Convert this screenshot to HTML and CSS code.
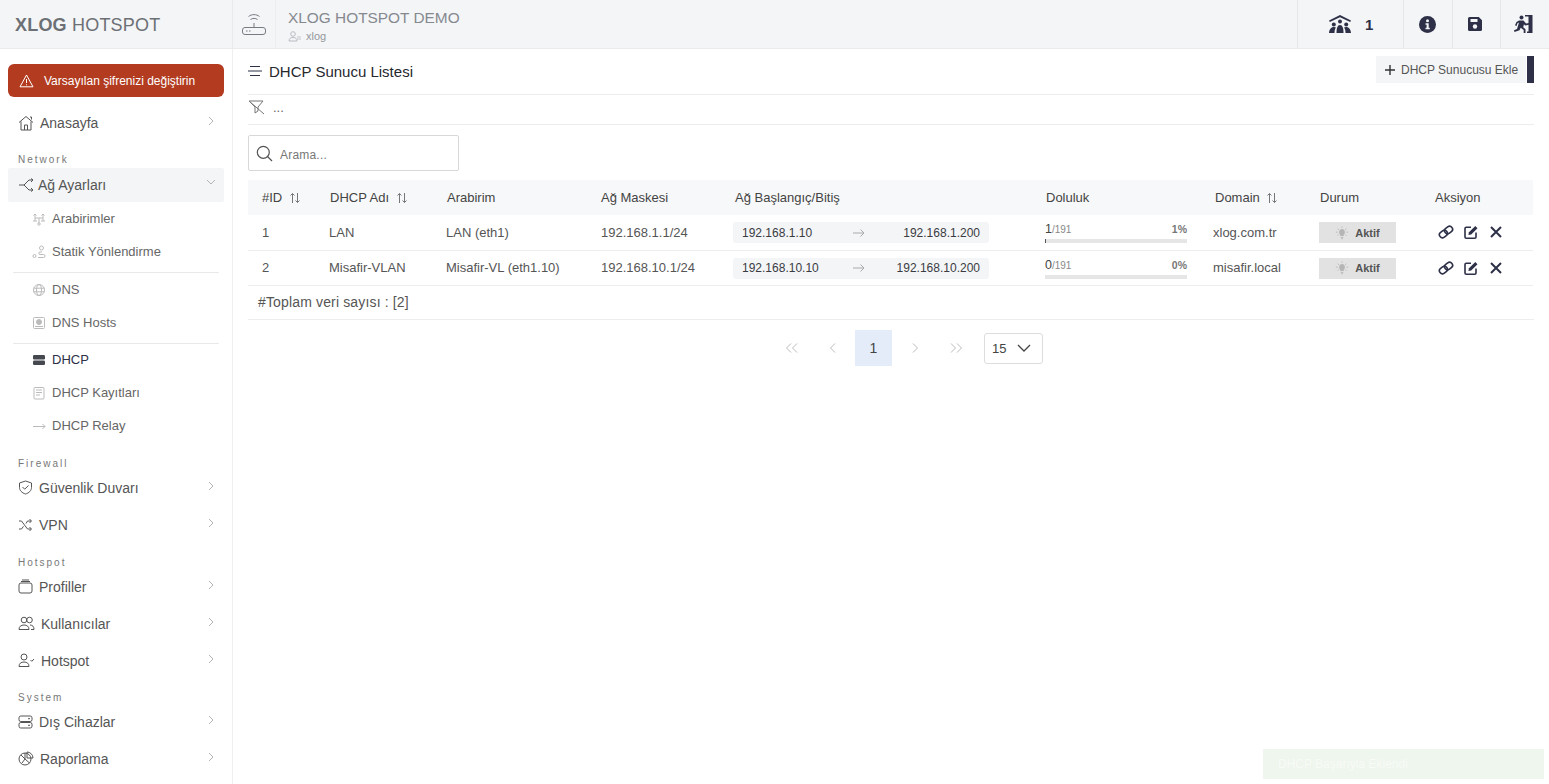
FILE: index.html
```html
<!DOCTYPE html>
<html lang="tr">
<head>
<meta charset="utf-8">
<title>XLOG HOTSPOT</title>
<link rel="stylesheet" href="styles.css">
</head>
<body>
<svg class="defs" width="0" height="0" aria-hidden="true">
  <defs>
    <symbol id="chev-r" viewBox="0 0 10 10"><path d="M3 1l4 4-4 4" fill="none" stroke="currentColor"/></symbol>
    <symbol id="sort" viewBox="0 0 12 12"><path d="M3.500 11V1.500M1.500 3.500l2-2 2 2M8.500 1v9.500M6.500 8.500l2 2 2-2" fill="none" stroke="currentColor"/></symbol>
    <symbol id="bulb" viewBox="0 0 16 16"><path d="M8 3.500a3.500 3.500 0 0 0-2 6.300V11.500h4V9.800a3.500 3.500 0 0 0-2-6.300z" fill="currentColor"/><path d="M6.500 13h3M7 14.500h2M1 7h2M13 7h2M3 3l1.400 1.400M13 3l-1.400 1.400M3 11l1.400-1.400M13 11l-1.400-1.400M8 0.500v1.500" fill="none" stroke="currentColor"/></symbol>
    <symbol id="link" viewBox="0 0 16 16"><g transform="rotate(-38 8 8)" fill="none" stroke="currentColor" stroke-width="1.600"><rect x="0.500" y="5" width="8.500" height="6" rx="3"/><rect x="7" y="5" width="8.500" height="6" rx="3"/></g></symbol>
    <symbol id="edit" viewBox="0 0 16 16"><path d="M13 8.500V13a1.200 1.200 0 0 1-1.200 1.200H3.200A1.200 1.200 0 0 1 2 13V4.500a1.200 1.200 0 0 1 1.200-1.200H8" fill="none" stroke="currentColor" stroke-width="1.600"/><path d="M6 8.300L12.300 2l2.200 2.200-6.300 6.300-2.800.6z" fill="currentColor"/></symbol>
    <symbol id="close" viewBox="0 0 16 16"><path d="M3 3l10 10M13 3L3 13" fill="none" stroke="currentColor" stroke-width="2"/></symbol>
    <symbol id="arrow" viewBox="0 0 12 10"><path d="M0 5h11M7.500 1.500L11 5 7.500 8.500" fill="none" stroke="currentColor"/></symbol>
  </defs>
</svg>
<div class="app">
  <header class="topbar">
    <div class="brand"><b>XLOG</b> HOTSPOT</div>
    <div class="device">
      <svg class="router" width="26" height="26" viewBox="0 0 26 26" fill="none" stroke="#777b82"><path d="M7.500 5.500c3-2.500 8-2.500 11 0M9.500 8.500c2-1.500 5-1.500 7 0M13 12v4"/><rect x="1.500" y="16.500" width="23" height="7" rx="2.500"/><path d="M5 20h1.500M8 20h1.500"/></svg>
      <div class="device-text">
        <div class="device-title">XLOG HOTSPOT DEMO</div>
        <div class="device-user"><svg width="14" height="11" viewBox="0 0 14 11" fill="none" stroke="#b9bcc1"><circle cx="5" cy="3" r="2.300"/><path d="M1 10c0-2.500 1.500-3.500 4-3.500s4 1 4 3.500z"/><path d="M9 6h4M9 8h4" stroke-width=".8"/></svg><span>xlog</span></div>
      </div>
    </div>
    <div class="top-actions">
      <div class="top-cell top-cell-users">
        <svg width="24" height="18" viewBox="0 0 24 18" fill="#2d3047"><path d="M12 0L1 5.500 1.800 7 12 2.200 22.200 7 23 5.500z"/><circle cx="12" cy="6.500" r="2"/><path d="M8.500 18c0-5 1-8 3.500-8s3.500 3 3.500 8z"/><circle cx="5.800" cy="9.500" r="2"/><path d="M1 18c.3-3.500 2-6 4.800-6 1 0 1.700.2 2.200.6-1 1.200-1.500 3-1.500 5.400z"/><circle cx="18.200" cy="9.500" r="2"/><path d="M23 18c-.3-3.500-2-6-4.800-6-1 0-1.700.2-2.200.6 1 1.200 1.500 3 1.500 5.400z"/></svg>
        <b>1</b>
      </div>
      <div class="top-cell top-cell-info">
        <svg width="17" height="17" viewBox="0 0 17 17"><circle cx="8.500" cy="8.500" r="8.500" fill="#2d3047"/><circle cx="8.500" cy="4.800" r="1.500" fill="#f4f5f7"/><path d="M6.500 7.300h3.200v4.500h1.100v1.500H6.500v-1.500h1.100V8.800H6.500z" fill="#f4f5f7"/></svg>
      </div>
      <div class="top-cell top-cell-save">
        <svg width="16" height="16" viewBox="0 0 16 16"><path d="M2.500 1h9.300L15 4.200v9.300A1.500 1.500 0 0 1 13.500 15h-11A1.500 1.500 0 0 1 1 13.500v-11A1.500 1.500 0 0 1 2.500 1z" fill="#2d3047"/><rect x="3.500" y="3" width="7" height="3" fill="#f4f5f7"/><circle cx="8" cy="10.500" r="2.200" fill="#f4f5f7"/></svg>
      </div>
      <div class="top-cell top-cell-exit">
        <svg width="20" height="18" viewBox="0 0 20 18" fill="#2d3047"><path d="M12 0h7.500v18H14v-1.500h1.500V1.500H12z"/><circle cx="8.500" cy="2.500" r="2"/><path d="M6 5.500h4.500L13 8.500l3-.5v1.800l-4 .7-1-1.200-.8 3 2.300 2V18h-1.800v-3l-3-2.200-1.200 2.500L1.500 17l-.5-1.700 3-1.300 2-6.500-1.500.7L3.500 11 2 10.300l1.500-3.300z"/></svg>
      </div>
    </div>
  </header>

  <nav class="sidebar">
    <a class="alert">
      <svg width="15" height="14" viewBox="0 0 15 14" fill="none" stroke="#fff"><path d="M7.500 1L14 12.800H1z" stroke-linejoin="round"/><path d="M7.500 5v4M7.500 10.300v1"/></svg>
      <span>Varsayılan şifrenizi değiştirin</span>
    </a>
    <a class="nav-item">
      <svg class="nav-ico" width="17" height="16" viewBox="0 0 17 16"><path d="M1 7.500L8 1.500l7 6M3 6.500V15h10V6.500M6.500 15v-5h3v5M12 2h1.500v2.500"/></svg>
      <span class="nav-text nav-gap-home">Anasayfa</span>
      <svg class="nav-chev" width="10" height="10"><use href="#chev-r"/></svg>
    </a>
    <div class="nav-label nav-label-net">Network</div>
    <a class="nav-item nav-item-open">
      <svg class="nav-ico" width="17" height="14" viewBox="0 0 17 14"><path d="M1 7h5l5-5h4M6 7l5 5h4M13 .5L15 2l-2 2M13 10l2 2-2 1.500"/></svg>
      <span class="nav-text nav-gap-net">Ağ Ayarları</span>
      <svg class="nav-chev nav-chev-down" width="10" height="10"><use href="#chev-r"/></svg>
    </a>
    <a class="sub-item">
      <svg class="sub-ico" width="14" height="14" viewBox="0 0 14 14"><path d="M3 2v7M11 2v7M3 6h8M7 6v5"/><circle cx="7" cy="12" r="1.200"/><path d="M1.500 3.500L3 2l1.500 1.500M9.500 3.500L11 2l1.500 1.500M1 9h4M9 9h4"/></svg>
      <span>Arabirimler</span>
    </a>
    <a class="sub-item">
      <svg class="sub-ico" width="14" height="14" viewBox="0 0 14 14"><circle cx="9.500" cy="3" r="2"/><path d="M6 12.500h5.500a1.500 1.500 0 0 0 0-3H8a1.200 1.200 0 0 1 0-2.500h2"/><circle cx="2.500" cy="11" r="1.500"/></svg>
      <span>Statik Yönlendirme</span>
    </a>
    <div class="sub-sep"></div>
    <a class="sub-item">
      <svg class="sub-ico" width="14" height="14" viewBox="0 0 14 14"><circle cx="7" cy="7" r="5.500"/><ellipse cx="7" cy="7" rx="2.500" ry="5.500"/><path d="M1.500 5.200h11M1.500 8.800h11"/></svg>
      <span>DNS</span>
    </a>
    <a class="sub-item">
      <svg class="sub-ico" width="14" height="14" viewBox="0 0 14 14"><rect x="1.500" y="1.500" width="11" height="11" rx="1"/><path d="M3 10.500h8"/><circle cx="7" cy="6" r="2.500" fill="#bbb"/></svg>
      <span>DNS Hosts</span>
    </a>
    <div class="sub-sep sub-sep-tight"></div>
    <a class="sub-item sub-item-active">
      <svg width="14" height="14" viewBox="0 0 14 14" fill="#45484f"><rect x="1" y="2" width="12" height="4.500" rx="1.200"/><rect x="1" y="7.500" width="12" height="4.500" rx="1.200"/></svg>
      <span>DHCP</span>
    </a>
    <a class="sub-item">
      <svg class="sub-ico" width="14" height="14" viewBox="0 0 14 14"><rect x="2" y="1.500" width="10" height="11.500" rx="1"/><path d="M4 4h6M4 6.500h6M4 9h4"/></svg>
      <span>DHCP Kayıtları</span>
    </a>
    <a class="sub-item">
      <svg class="sub-ico" width="14" height="14" viewBox="0 0 14 14"><path d="M1 7.500h12M10.500 5l2.500 2.500L10.500 10"/></svg>
      <span>DHCP Relay</span>
    </a>
    <div class="nav-label nav-label-firewall">Firewall</div>
    <a class="nav-item">
      <svg class="nav-ico" width="15" height="15" viewBox="0 0 15 15"><path d="M7.500 1l6 2v4.500c0 3-2.500 5.500-6 6.500-3.500-1-6-3.500-6-6.500V3z"/><path d="M4.500 7l2.200 2.200 3.800-3.700"/></svg>
      <span class="nav-text">Güvenlik Duvarı</span>
      <svg class="nav-chev" width="10" height="10"><use href="#chev-r"/></svg>
    </a>
    <a class="nav-item">
      <svg class="nav-ico" width="15" height="14" viewBox="0 0 15 14"><path d="M1 3h2.500l6 8H13M1 11h2.500l2-2.700M8 5.500L9.500 3H13M11.500 1L13.500 3l-2 2M11.500 9l2 2-2 2"/></svg>
      <span class="nav-text">VPN</span>
      <svg class="nav-chev" width="10" height="10"><use href="#chev-r"/></svg>
    </a>
    <div class="nav-label nav-label-hotspot">Hotspot</div>
    <a class="nav-item">
      <svg class="nav-ico" width="15" height="15" viewBox="0 0 15 15"><rect x="1" y="4" width="13" height="10" rx="2"/><path d="M3 2.500h9M4 1h7"/></svg>
      <span class="nav-text">Profiller</span>
      <svg class="nav-chev" width="10" height="10"><use href="#chev-r"/></svg>
    </a>
    <a class="nav-item">
      <svg class="nav-ico" width="17" height="15" viewBox="0 0 17 15"><circle cx="6" cy="4" r="2.800"/><circle cx="11.500" cy="4" r="2.800"/><path d="M1 13.500c0-3 2-4.500 5-4.500s5 1.500 5 4.500zM12 9c2.500 0 4 1.500 4 4.500h-3"/></svg>
      <span class="nav-text nav-gap-user">Kullanıcılar</span>
      <svg class="nav-chev" width="10" height="10"><use href="#chev-r"/></svg>
    </a>
    <a class="nav-item">
      <svg class="nav-ico" width="17" height="15" viewBox="0 0 17 15"><circle cx="6" cy="4" r="3"/><path d="M1 13.500c0-3 2-4.500 5-4.500s5 1.500 5 4.500zM12.500 7l1.300 1.300L16 6"/></svg>
      <span class="nav-text nav-gap-user">Hotspot</span>
      <svg class="nav-chev" width="10" height="10"><use href="#chev-r"/></svg>
    </a>
    <div class="nav-label nav-label-system">System</div>
    <a class="nav-item">
      <svg class="nav-ico" width="15" height="14" viewBox="0 0 15 14"><rect x="1" y="1" width="13" height="5.500" rx="1.800"/><rect x="1" y="7.500" width="13" height="5.500" rx="1.800"/><path d="M10 3.700h2M10 10.300h2"/></svg>
      <span class="nav-text">Dış Cihazlar</span>
      <svg class="nav-chev" width="10" height="10"><use href="#chev-r"/></svg>
    </a>
    <a class="nav-item">
      <svg class="nav-ico" width="16" height="15" viewBox="0 0 16 15"><circle cx="7" cy="8" r="6"/><path d="M7 2v6l4.500 4M9 1a6 6 0 0 1 6 6H9zM7 8L3 4M7 8l-3 4"/></svg>
      <span class="nav-text nav-gap-report">Raporlama</span>
      <svg class="nav-chev" width="10" height="10"><use href="#chev-r"/></svg>
    </a>
  </nav>

  <main class="content">
    <div class="page-head">
      <div class="page-title">
        <svg width="14" height="12" viewBox="0 0 14 12" fill="none" stroke="#2d3047"><path d="M2 1.500h10M0 6h14M2 10.500h10"/></svg>
        <span>DHCP Sunucu Listesi</span>
      </div>
      <div class="page-btns">
        <a class="btn-add"><svg width="10" height="10" viewBox="0 0 10 10" stroke="#333" fill="none" stroke-width="1.400"><path d="M5 0v10M0 5h10"/></svg>DHCP Sunucusu Ekle</a>
        <span class="btn-bar"></span>
      </div>
    </div>
    <div class="filter-row">
      <svg width="17" height="15" viewBox="0 0 17 15" fill="none" stroke="#777"><path d="M1 1h14L10 7v4l-3 2V7zM1 1l15 13"/></svg>
      <span>...</span>
    </div>
    <div class="search-box">
      <svg width="17" height="17" viewBox="0 0 17 17" fill="none" stroke="#555" stroke-width="1.200"><circle cx="7.300" cy="7.300" r="6"/><path d="M11.500 11.500l4.500 4.500"/></svg>
      <span>Arama...</span>
    </div>

    <table class="grid">
      <colgroup><col><col><col><col><col><col><col><col><col></colgroup>
      <thead>
        <tr>
          <th class="th-first">#ID <svg class="sort" width="12" height="12"><use href="#sort"/></svg></th>
          <th>DHCP Adı <svg class="sort" width="12" height="12"><use href="#sort"/></svg></th>
          <th>Arabirim</th>
          <th>Ağ Maskesi</th>
          <th>Ağ Başlangıç/Bitiş</th>
          <th>Doluluk</th>
          <th>Domain <svg class="sort" width="12" height="12"><use href="#sort"/></svg></th>
          <th>Durum</th>
          <th>Aksiyon</th>
        </tr>
      </thead>
      <tbody>
        <tr>
          <td class="td-first">1</td><td>LAN</td><td>LAN (eth1)</td><td class="td-mask">192.168.1.1/24</td>
          <td><div class="range"><span>192.168.1.10</span><svg width="12" height="10"><use href="#arrow"/></svg><span class="range-end">192.168.1.200</span></div></td>
          <td><div class="fill-top"><span><b>1</b>/191</span><strong>1%</strong></div><div class="fill-bar"><div class="fill-val" style="width:1%"></div></div></td>
          <td class="td-domain">xlog.com.tr</td>
          <td><span class="status"><svg width="14" height="14"><use href="#bulb"/></svg>Aktif</span></td>
          <td><div class="acts"><svg width="16" height="16"><use href="#link"/></svg><svg width="16" height="16"><use href="#edit"/></svg><svg width="16" height="16"><use href="#close"/></svg></div></td>
        </tr>
        <tr>
          <td class="td-first">2</td><td>Misafir-VLAN</td><td>Misafir-VL (eth1.10)</td><td class="td-mask">192.168.10.1/24</td>
          <td><div class="range"><span>192.168.10.10</span><svg width="12" height="10"><use href="#arrow"/></svg><span class="range-end">192.168.10.200</span></div></td>
          <td><div class="fill-top"><span><b>0</b>/191</span><strong>0%</strong></div><div class="fill-bar"><div class="fill-val" style="width:0%"></div></div></td>
          <td class="td-domain">misafir.local</td>
          <td><span class="status"><svg width="14" height="14"><use href="#bulb"/></svg>Aktif</span></td>
          <td><div class="acts"><svg width="16" height="16"><use href="#link"/></svg><svg width="16" height="16"><use href="#edit"/></svg><svg width="16" height="16"><use href="#close"/></svg></div></td>
        </tr>
      </tbody>
    </table>
    <div class="total">#Toplam veri sayısı : [2]</div>

    <div class="pager">
      <a class="pg"><svg width="14" height="10" viewBox="0 0 14 10" fill="none" stroke="currentColor"><path d="M6 .5L1.500 5 6 9.500M12 .5L7.500 5 12 9.500"/></svg></a>
      <a class="pg"><svg width="8" height="10" viewBox="0 0 8 10" fill="none" stroke="currentColor"><path d="M6 .5L1.500 5 6 9.500"/></svg></a>
      <a class="pg pg-on">1</a>
      <a class="pg"><svg width="8" height="10" viewBox="0 0 8 10" fill="none" stroke="currentColor"><path d="M2 .5L6.500 5 2 9.500"/></svg></a>
      <a class="pg"><svg width="14" height="10" viewBox="0 0 14 10" fill="none" stroke="currentColor"><path d="M2 .5L6.500 5 2 9.500M8 .5L12.500 5 8 9.500"/></svg></a>
      <div class="pg-size"><span>15</span><svg width="14" height="8" viewBox="0 0 14 8" fill="none" stroke="#444" stroke-width="1.300"><path d="M1 1l6 6 6-6"/></svg></div>
    </div>
  </main>
</div>
<div class="toast">DHCP Başarıyla Eklendi</div>
</body>
</html>
```

FILE: styles.css
```css
* { box-sizing: border-box; }
html, body { margin: 0; height: 100%; overflow: hidden; }
body { font-family: "Liberation Sans", Arial, sans-serif; font-size: 13px; color: #555; background: #fff; }
.defs { position: absolute; }
a { color: inherit; text-decoration: none; }

.app { display: grid; grid-template-columns: 233px 1fr; grid-template-rows: 49px 1fr; height: 784px; }

.topbar { grid-column: 1 / 3; display: flex; background: #f4f5f7; border-bottom: 1px solid #e9eaec; }
.brand { width: 233px; padding: 15px 0 0 15px; font-size: 18px; line-height: 21px; letter-spacing: .2px; color: #6c7075; border-right: 1px solid #e9eaec; }
.brand b { color: #6c7075; }
.device { display: flex; align-items: center; flex: 1; padding-left: 8px; }
.router { flex: none; }
.device-text { margin-left: 8px; padding-left: 12px; border-left: 1px solid #eceded; height: 48px; padding-top: 8px; }
.device-title { font-size: 15.400px; line-height: 19px; color: #85898f; }
.device-user { display: flex; align-items: center; gap: 4px; font-size: 11px; line-height: 16px; color: #94989d; margin-top: 1px; }
.top-actions { display: flex; height: 48px; }
.top-cell { width: 49px; display: flex; align-items: center; justify-content: center; border-left: 1px solid #e6e7ea; }
.top-cell-users { width: 106px; justify-content: flex-start; gap: 13px; padding-left: 30px; font-size: 15px; color: #2d3047; }
.top-cell-info { padding-right: 2px; }
.top-cell-save { width: 48px; padding-right: 4px; }
.top-cell-exit { padding-right: 5px; }

.sidebar { border-right: 1px solid #eeeff1; padding: 15px 8px 0; }
.alert { display: flex; align-items: center; height: 33px; padding-left: 11px; gap: 10px; background: #b23b20; border-radius: 6px; color: #fff; font-size: 12px; }
.nav-item { display: flex; align-items: center; height: 37px; padding-left: 10px; color: #555; font-size: 14px; position: relative; }
.alert + .nav-item { margin-top: 7px; }
.nav-item-open { height: 34px; background: #f4f5f7; border-radius: 2px; }
.nav-ico { flex: none; fill: none; stroke: #555; stroke-width: 1; }
.nav-text { margin-left: 6px; }
.nav-gap-home { margin-left: 5px; }
.nav-gap-net { margin-left: 3px; }
.nav-gap-user { margin-left: 6px; }
.nav-gap-report { margin-left: 6px; }
.nav-chev { position: absolute; right: 8px; top: 12px; color: #b5b5b5; }
.nav-chev-down { transform: rotate(90deg); top: 9px; }
.nav-label { height: 25px; padding-left: 10px; font-size: 10px; line-height: 15px; letter-spacing: 2px; color: #777; }
.nav-label-net { height: 27px; padding-top: 11px; }
.nav-label-firewall { height: 27px; padding-top: 14px; }
.nav-label-hotspot { padding-top: 12px; }
.nav-label-system { height: 24px; padding-top: 11px; }
.sub-item { display: flex; align-items: center; height: 33px; padding-left: 24px; gap: 6px; font-size: 13px; color: #666; }
.sub-item-active { color: #2d3047; }
.sub-ico { flex: none; fill: none; stroke: #bbb; stroke-width: 1; }
.sub-sep { height: 1px; margin: 4px 5px 0; background: #e9e9ec; }
.sub-sep-tight { margin-bottom: -1px; }

.content { padding: 0 15px; min-width: 0; }
.page-head { display: flex; justify-content: space-between; height: 46px; padding-top: 7px; border-bottom: 1px solid #eceded; }
.page-title { display: flex; align-items: center; height: 30px; gap: 7px; font-size: 15px; color: #26282e; }
.page-btns { display: flex; height: 27px; }
.btn-add { display: flex; align-items: center; gap: 6px; width: 150px; padding-left: 9px; margin-right: 1px; background: #f4f5f7; font-size: 12px; color: #555; }
.btn-bar { width: 7px; background: #2d3047; }
.filter-row { display: flex; align-items: center; height: 30px; gap: 8px; padding-bottom: 4px; border-bottom: 1px solid #eceded; color: #666; }
.search-box { display: flex; align-items: center; width: 211px; height: 36px; margin-top: 10px; padding-left: 7px; gap: 7px; border: 1px solid #d8d8db; border-radius: 2px; color: #777; font-size: 12px; letter-spacing: .2px; }
.search-box span { padding-top: 4px; }

.grid { width: 1285px; margin-top: 9px; border-collapse: collapse; table-layout: fixed; font-size: 13px; }
col:nth-child(1) { width: 68px; }
col:nth-child(2) { width: 117px; }
col:nth-child(3) { width: 154px; }
col:nth-child(4) { width: 134px; }
col:nth-child(5) { width: 311px; }
col:nth-child(6) { width: 169px; }
col:nth-child(7) { width: 105px; }
col:nth-child(8) { width: 115px; }
col:nth-child(9) { width: 112px; }
th { height: 35px; padding: 0 0 0 14px; text-align: left; font-weight: 400; background: #f7f8f9; color: #444; white-space: nowrap; }
td { height: 35px; padding: 0 0 0 13px; border-bottom: 1px solid #eceded; color: #555; white-space: nowrap; }
td.td-first { padding-left: 14px; }
td.td-mask { padding-left: 14px; }
td.td-domain { padding-left: 12px; }
.sort { color: #777; margin-left: 3px; vertical-align: -2px; }
.range { display: grid; grid-template-columns: 1fr 12px 1fr; align-items: center; width: 256px; height: 21px; margin: 1px 0 0 -1px; padding: 0 9px; background: #f4f5f7; border-radius: 3px; font-size: 12px; color: #3a3c42; }
.range svg { color: #aaa; margin-left: -2px; }
.range-end { text-align: right; }
.fill-top { display: flex; justify-content: space-between; align-items: baseline; width: 142px; height: 15px; line-height: 17px; font-size: 10px; color: #888; }
.fill-top b { font-size: 12.500px; font-weight: 400; color: #444; }
.fill-top strong { font-size: 10.500px; color: #777; }
.fill-bar { width: 142px; height: 4px; margin-top: 3px; background: #e6e6e6; }
.fill-val { height: 4px; background: #555; }
.status { display: flex; align-items: center; justify-content: center; gap: 6px; width: 77px; height: 21px; margin-top: 1px; background: #e2e2e2; font-size: 11px; font-weight: 700; color: #555; }
.status svg { color: #b5b5b5; }
.acts { display: flex; align-items: center; gap: 9px; padding-left: 4px; color: #2d3047; }
.total { height: 34px; padding-left: 10px; line-height: 33px; font-size: 14px; letter-spacing: .15px; border-bottom: 1px solid #eceded; color: #555; }

.pager { display: flex; align-items: center; margin-top: 10px; padding-left: 525px; }
.pg { display: flex; align-items: center; justify-content: center; width: 37px; height: 36px; margin-right: 4px; color: #bbb; font-size: 14px; }
.pg-on { background: #e3ecf8; color: #444; }
.pg-size { display: flex; align-items: center; justify-content: space-between; width: 59px; height: 31px; margin: 1px 0 0 6px; padding: 0 11px 0 7px; border: 1px solid #ddd; border-radius: 3px; color: #444; }
.toast { position: absolute; left: 1263px; top: 749px; width: 281px; height: 30px; padding-left: 15px; line-height: 30px; background: #eff6ee; color: #f8fbf7; font-size: 12px; }
```
